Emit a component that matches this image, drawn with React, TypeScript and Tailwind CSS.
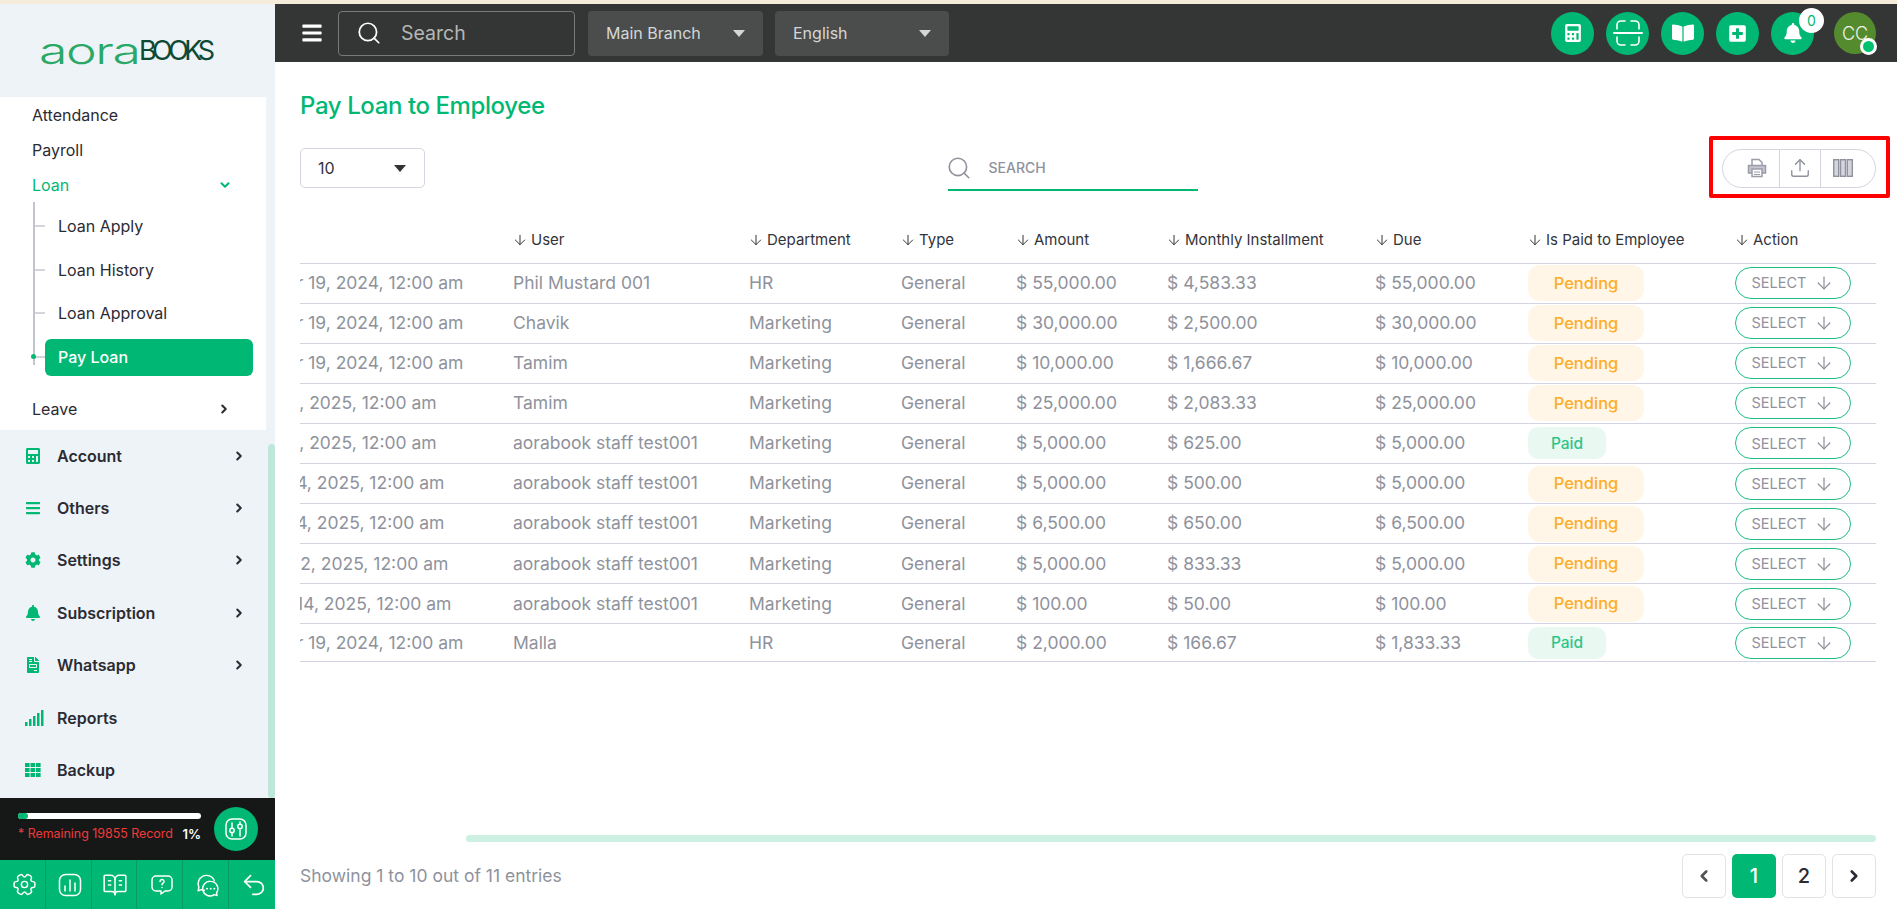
import { ArrowDown, BookOpenText, ChevronDown, ChevronLeft, ChevronRight, Search, Undo2, Upload } from "lucide-react";
import { FaBars, FaBell, FaBookOpen, FaCalculator, FaCog, FaFileInvoice, FaPlusSquare } from "react-icons/fa";
import type { ReactNode } from "react";

const rows = [
  { date: "Mar 19, 2024, 12:00 am", clip: "ml-[-29px]", user: "Phil Mustard 001", dept: "HR", amount: "55,000.00", monthly: "4,583.33", due: "55,000.00", paid: false },
  { date: "Mar 19, 2024, 12:00 am", clip: "ml-[-29px]", user: "Chavik", dept: "Marketing", amount: "30,000.00", monthly: "2,500.00", due: "30,000.00", paid: false },
  { date: "Mar 19, 2024, 12:00 am", clip: "ml-[-29px]", user: "Tamim", dept: "Marketing", amount: "10,000.00", monthly: "1,666.67", due: "10,000.00", paid: false },
  { date: "Jan 1, 2025, 12:00 am", clip: "ml-[-43px]", user: "Tamim", dept: "Marketing", amount: "25,000.00", monthly: "2,083.33", due: "25,000.00", paid: false },
  { date: "Jan 1, 2025, 12:00 am", clip: "ml-[-43px]", user: "aorabook staff test001", dept: "Marketing", amount: "5,000.00", monthly: "625.00", due: "5,000.00", paid: true },
  { date: "Mar 4, 2025, 12:00 am", clip: "ml-[-41px]", user: "aorabook staff test001", dept: "Marketing", amount: "5,000.00", monthly: "500.00", due: "5,000.00", paid: false },
  { date: "Mar 4, 2025, 12:00 am", clip: "ml-[-41px]", user: "aorabook staff test001", dept: "Marketing", amount: "6,500.00", monthly: "650.00", due: "6,500.00", paid: false },
  { date: "Mar 2, 2025, 12:00 am", clip: "ml-[-37px]", user: "aorabook staff test001", dept: "Marketing", amount: "5,000.00", monthly: "833.33", due: "5,000.00", paid: false },
  { date: "Jan 14, 2025, 12:00 am", clip: "ml-[-39px]", user: "aorabook staff test001", dept: "Marketing", amount: "100.00", monthly: "50.00", due: "100.00", paid: false },
  { date: "Mar 19, 2024, 12:00 am", clip: "ml-[-29px]", user: "Malla", dept: "HR", amount: "2,000.00", monthly: "166.67", due: "1,833.33", paid: true },
];

const columns = ["User", "Department", "Type", "Amount", "Monthly Installment", "Due", "Is Paid to Employee", "Action"];

function ReportsIcon() {
  return (
    <svg width="19" height="16" viewBox="0 0 19 16" fill="#00b873">
      <rect x="0" y="12" width="2.5" height="4" />
      <rect x="4" y="9" width="2.5" height="7" />
      <rect x="8" y="6" width="2.5" height="10" />
      <rect x="12" y="3" width="2.5" height="13" />
      <rect x="16" y="0" width="2.5" height="16" />
    </svg>
  );
}

function GridIcon() {
  return (
    <svg width="16" height="14" viewBox="0 0 16 14" fill="#00b873">
      {[0, 5.5, 11].map((x) => [0, 5, 10].map((y) => <rect key={`${x}-${y}`} x={x} y={y} width="4.6" height="4" />))}
    </svg>
  );
}

function ScanIcon() {
  return (
    <svg width="30" height="26" viewBox="0 0 30 26" fill="none" stroke="white" strokeWidth="1.6" strokeLinecap="round">
      <path d="M4 9V5a4 4 0 0 1 4-4h4M18 1h4a4 4 0 0 1 4 4v4M4 17v4a4 4 0 0 0 4 4h4M18 25h4a4 4 0 0 0 4-4v-4" />
      <path d="M1 13h28" strokeWidth="2" />
    </svg>
  );
}

function SlidersIcon() {
  return (
    <svg width="24" height="24" viewBox="0 0 24 24" fill="none" stroke="white" strokeWidth="1.5" strokeLinecap="round">
      <rect x="2" y="2" width="20" height="20" rx="6" />
      <path d="M8 6v5M8 16v3M16 5v2M16 13v6" />
      <circle cx="8" cy="13.5" r="2.2" />
      <circle cx="16" cy="9.5" r="2.2" />
    </svg>
  );
}

function GearIcon() {
  return (
    <svg width="25" height="25" viewBox="0 0 24 24" fill="none" stroke="white" strokeWidth="1.4" strokeLinejoin="round">
      <circle cx="12" cy="12" r="3" />
      <path d="M2 12.88v-1.76c0-1.04.85-1.9 1.9-1.9 1.81 0 2.55-1.28 1.64-2.85-.52-.9-.21-2.07.7-2.59l1.73-.99c.79-.47 1.81-.19 2.28.6l.11.19c.9 1.57 2.38 1.57 3.29 0l.11-.19c.47-.79 1.49-1.07 2.28-.6l1.73.99c.91.52 1.22 1.69.7 2.59-.91 1.57-.17 2.85 1.64 2.85 1.04 0 1.9.85 1.9 1.9v1.76c0 1.04-.85 1.9-1.9 1.9-1.81 0-2.55 1.28-1.64 2.85.52.91.21 2.07-.7 2.59l-1.73.99c-.79.47-1.81.19-2.28-.6l-.11-.19c-.9-1.57-2.38-1.57-3.29 0l-.11.19c-.47.79-1.49 1.07-2.28.6l-1.73-.99a1.899 1.899 0 0 1-.7-2.59c.91-1.57.17-2.85-1.64-2.85-1.05 0-1.9-.86-1.9-1.9Z" />
    </svg>
  );
}

function ChartBoxIcon() {
  return (
    <svg width="24" height="24" viewBox="0 0 24 24" fill="none" stroke="white" strokeWidth="1.5" strokeLinecap="round">
      <rect x="1.5" y="1.5" width="21" height="21" rx="6" />
      <path d="M7 18v-5M12 18V7M17 18v-8" />
    </svg>
  );
}

function QuestionIcon() {
  return (
    <svg width="24" height="24" viewBox="0 0 24 24" fill="none" stroke="white" strokeWidth="1.5" strokeLinecap="round" strokeLinejoin="round">
      <path d="M6 3h12a4 4 0 0 1 4 4v7a4 4 0 0 1-4 4h-3l-4 3v-3H6a4 4 0 0 1-4-4V7a4 4 0 0 1 4-4z" />
      <path d="M10 8.5a2 2 0 1 1 3 1.7c-.7.4-1 .8-1 1.5M12 14.5v.1" />
    </svg>
  );
}

function ChatIcon() {
  return (
    <svg width="25" height="25" viewBox="0 0 24 24" fill="none" stroke="white" strokeWidth="1.4" strokeLinecap="round" strokeLinejoin="round">
      <path d="M9 17.5c-1 0-2-.2-2.9-.6L3 18l.7-3.2A8 8 0 1 1 18.5 8" />
      <path d="M15 9a7 7 0 0 1 5.7 11l.5 2.6-2.8-.9A7 7 0 1 1 15 9z" />
      <path d="M11.5 16h.1M15 16h.1M18.5 16h.1" strokeWidth="1.8" />
    </svg>
  );
}

function PrinterIcon() {
  return (
    <svg width="20" height="20" viewBox="0 0 20 20" fill="none" stroke="#9a9ca8" strokeWidth="1.5">
      <path d="M5 7V1.5h7l3 3V7" />
      <path d="M5 15H1.5V7.5h17V15H15" fill="#c3c5cf" />
      <rect x="5" y="11" width="10" height="7.5" fill="white" />
      <path d="M7 14h6M7 16.5h6" strokeWidth="1" />
    </svg>
  );
}

function ColumnsIcon() {
  return (
    <svg width="20" height="18" viewBox="0 0 20 18" fill="#d3d4dc" stroke="#8f919e" strokeWidth="1.4">
      <rect x="0.7" y="0.7" width="5" height="16.6" />
      <rect x="7.5" y="0.7" width="5" height="16.6" />
      <rect x="14.3" y="0.7" width="5" height="16.6" />
    </svg>
  );
}

function SideItem({ icon, label, arrow = true }: { icon: ReactNode; label: string; arrow?: boolean }) {
  return (
    <div className="flex h-[52.4px] items-center pr-[29px] pl-[25px] text-[16px] font-semibold text-[#2b2b33]">
      <span className="flex w-[32px] shrink-0 items-center">{icon}</span>
      <span className="flex-1">{label}</span>
      {arrow && <ChevronRight className="size-[14px]" strokeWidth={3.5} />}
    </div>
  );
}

function SubItem({ label, active }: { label: string; active?: boolean }) {
  return (
    <div className="flex h-[43.8px] items-center">
      <span className="h-[2px] w-[12px] shrink-0 bg-[#d4d4dc]" />
      {active ? (
        <span className="flex h-[37px] w-[208px] items-center rounded-[6px] bg-[#00b873] pl-[13px] font-medium text-white">{label}</span>
      ) : (
        <span className="pl-[13px] text-[#2b2b33]">{label}</span>
      )}
    </div>
  );
}

function Sidebar() {
  return (
    <aside className="flex w-[275px] shrink-0 flex-col bg-[#eef3f8]">
      <div className="flex h-[93px] shrink-0 items-center pl-[39px] leading-none">
        <span className="inline-block origin-left scale-x-[1.4] text-[37px] font-light tracking-[-1px] text-[#2aa866]">aora</span>
        <span className="ml-[28px] text-[27px] font-normal tracking-[-4.5px] text-[#0d4a34]">BOOKS</span>
      </div>
      <div className="relative flex flex-1 flex-col">
        <div className="absolute top-[347px] right-0 bottom-0 w-[7px] rounded-[4px] bg-[#bde8d9]" />
        <div className="h-[332.5px] w-[266px] bg-white text-[16px]">
          <div className="flex h-[35px] items-center pl-[32px] text-[#2b2b33]">Attendance</div>
          <div className="flex h-[35px] items-center pl-[32px] text-[#2b2b33]">Payroll</div>
          <div className="flex h-[35px] items-center justify-between pr-[34px] pl-[32px] text-[#00b873]">
            Loan
            <ChevronDown className="size-[14px]" strokeWidth={3.5} />
          </div>
          <div className="relative ml-[33px] border-0 pt-[2px]">
            <div className="absolute top-0 left-0 h-[163px] w-[1.5px] bg-[#c4c4cf]" />
            <div className="absolute top-[152px] left-[-2px] size-[5px] rounded-full bg-[#00b873]" />
            <SubItem label="Loan Apply" />
            <SubItem label="Loan History" />
            <SubItem label="Loan Approval" />
            <SubItem label="Pay Loan" active />
          </div>
          <div className="mt-[12px] flex h-[35px] items-center justify-between pr-[35px] pl-[32px] text-[#2b2b33]">
            Leave
            <ChevronRight className="size-[14px]" strokeWidth={3.5} />
          </div>
        </div>
        <SideItem icon={<FaCalculator className="size-[16px] text-[#00b873]" />} label="Account" />
        <SideItem icon={<FaBars className="size-[16px] text-[#00b873]" />} label="Others" />
        <SideItem icon={<FaCog className="size-[16px] text-[#00b873]" />} label="Settings" />
        <SideItem icon={<FaBell className="size-[16px] text-[#00b873]" />} label="Subscription" />
        <SideItem icon={<FaFileInvoice className="size-[16px] text-[#00b873]" />} label="Whatsapp" />
        <SideItem icon={<ReportsIcon />} label="Reports" arrow={false} />
        <SideItem icon={<GridIcon />} label="Backup" arrow={false} />
      </div>
      <div className="flex h-[62px] shrink-0 items-center justify-between bg-[#161818] pr-[17px] pl-[18px]">
        <div className="w-[183px]">
          <div className="h-[6px] rounded-full bg-white">
            <div className="h-[6px] w-[10px] rounded-full bg-[#00b873]" />
          </div>
          <div className="mt-[6px] flex justify-between text-[12.4px] whitespace-nowrap">
            <span className="text-[#f03a3a]">* Remaining 19855 Record</span>
            <span className="text-[13px] font-semibold text-white">1%</span>
          </div>
        </div>
        <div className="flex size-[44px] items-center justify-center rounded-full bg-[#00b873]">
          <SlidersIcon />
        </div>
      </div>
      <div className="grid h-[49px] shrink-0 grid-cols-6 divide-x divide-[#0a9a63] bg-[#00b873] text-white">
        <div className="flex items-center justify-center pl-[4px]"><GearIcon /></div>
        <div className="flex items-center justify-center pl-[4px]"><ChartBoxIcon /></div>
        <div className="flex items-center justify-center pl-[2px]"><BookOpenText className="size-[26px]" strokeWidth={1.4} /></div>
        <div className="flex items-center justify-center pl-[4px]"><QuestionIcon /></div>
        <div className="flex items-center justify-center pl-[4px]"><ChatIcon /></div>
        <div className="flex items-center justify-center pl-[4px]"><Undo2 className="size-[28px]" strokeWidth={1.5} /></div>
      </div>
    </aside>
  );
}

function RoundButton({ children }: { children: ReactNode }) {
  return <div className="flex size-[43px] items-center justify-center rounded-full bg-[#00b873] text-white">{children}</div>;
}

function Topbar() {
  return (
    <header className="flex h-[58px] shrink-0 items-center bg-[#333635] pr-[21px] pl-[26px]">
      <FaBars className="size-[22px] text-white" />
      <div className="ml-[15px] flex h-[45px] w-[237px] items-center rounded-[4px] border border-[#777a79] pl-[17px] text-[19.5px] text-[#b5b7b6]">
        <Search className="size-[26px] text-white" strokeWidth={1.6} />
        <span className="ml-[19px] pt-[1px]">Search</span>
      </div>
      <div className="ml-[13px] flex h-[45px] w-[175px] items-center justify-between rounded-[4px] bg-[#4a4d4c] pr-[18px] pl-[18px] text-[16px] text-[#d5d6d6]">
        Main Branch
        <span className="h-0 w-0 border-x-[6px] border-t-[7px] border-x-transparent border-t-[#d5d6d6]" />
      </div>
      <div className="ml-[12px] flex h-[45px] w-[174px] items-center justify-between rounded-[4px] bg-[#4a4d4c] pr-[18px] pl-[18px] text-[16px] text-[#d5d6d6]">
        English
        <span className="h-0 w-0 border-x-[6px] border-t-[7px] border-x-transparent border-t-[#d5d6d6]" />
      </div>
      <div className="ml-auto flex items-center gap-[12px]">
        <RoundButton><FaCalculator className="size-[18px]" /></RoundButton>
        <RoundButton><ScanIcon /></RoundButton>
        <RoundButton><FaBookOpen className="size-[22px]" /></RoundButton>
        <RoundButton><FaPlusSquare className="size-[19px]" /></RoundButton>
        <div className="relative">
          <RoundButton><FaBell className="size-[20px]" /></RoundButton>
          <span className="absolute top-[-4px] right-[-10px] flex size-[25px] items-center justify-center rounded-full bg-white text-[14px] text-[#00b873]">0</span>
        </div>
        <div className="relative ml-[8px] flex size-[42px] items-center justify-center rounded-full bg-[#558b2f] text-[18px] font-light text-[#eef3e6]">
          CC
          <span className="absolute right-[-1px] bottom-[-1px] size-[17px] rounded-full border-[3px] border-white bg-[#00c26e]" />
        </div>
      </div>
    </header>
  );
}

function LoanTable() {
  return (
    <table className="mt-[32px] w-full table-fixed border-collapse text-left">
      <colgroup>
        <col className="w-[213px]" />
        <col className="w-[236px]" />
        <col className="w-[152px]" />
        <col className="w-[115px]" />
        <col className="w-[151px]" />
        <col className="w-[208px]" />
        <col className="w-[153px]" />
        <col className="w-[207px]" />
        <col />
      </colgroup>
      <thead>
        <tr className="h-[43px] border-b border-[#d3d3e3] text-[15px] text-[#33343b]">
          <th />
          {columns.map((column) => (
            <th key={column} className="pb-[2px] font-normal">
              <span className="ml-[-1px] flex items-center gap-[3px] whitespace-nowrap">
                <ArrowDown className="size-[16px]" strokeWidth={1.5} />
                {column}
              </span>
            </th>
          ))}
        </tr>
      </thead>
      <tbody className="text-[17.5px] text-[#8f929c]">
        {rows.map((row, index) => (
          <tr key={index} className="h-[40.1px] border-b border-[#d3d3e3] last:h-[38px]">
            <td className="overflow-hidden">
              <div className={`${row.clip} whitespace-nowrap`}>{row.date}</div>
            </td>
            <td className="whitespace-nowrap">{row.user}</td>
            <td>{row.dept}</td>
            <td>General</td>
            <td>$ {row.amount}</td>
            <td>$ {row.monthly}</td>
            <td>$ {row.due}</td>
            <td>
              {row.paid ? (
                <span className="flex h-[32px] w-[78px] items-center justify-center rounded-[10px] bg-[#eaf8f2] text-[15.5px] font-medium text-[#2cc58a]">Paid</span>
              ) : (
                <span className="flex h-[36px] w-[116px] items-center justify-center rounded-[12px] bg-[#fff6e8] text-[16.5px] font-medium text-[#fdad26]">Pending</span>
              )}
            </td>
            <td>
              <span className="flex h-[32px] w-[116px] items-center justify-center gap-[8px] rounded-full border-[1.5px] border-[#1fbd7f] text-[14.5px]">
                SELECT
                <ArrowDown className="size-[20px]" strokeWidth={1.5} />
              </span>
            </td>
          </tr>
        ))}
      </tbody>
    </table>
  );
}

function PageButton({ children, active }: { children: ReactNode; active?: boolean }) {
  return (
    <div className={active ? "flex size-[44px] items-center justify-center rounded-[5px] bg-[#00b873] text-[20px] font-medium text-white" : "flex size-[44px] items-center justify-center rounded-[5px] border border-[#e2e3e8] text-[20px] font-medium text-[#2b2b33]"}>
      {children}
    </div>
  );
}

export default function App() {
  return (
    <div className="flex h-[909px] w-[1897px] flex-col overflow-hidden bg-white font-['Inter',sans-serif]">
      <div className="h-[4px] shrink-0 bg-[#f5ecdc]" />
      <div className="flex flex-1">
        <Sidebar />
        <div className="relative flex flex-1 flex-col">
          <Topbar />
          <main className="flex flex-1 flex-col pr-[21px] pb-[11px] pl-[25px]">
            <h1 className="mt-[29px] text-[24px] leading-[30px] font-medium tracking-[-0.4px] text-[#00b873]">Pay Loan to Employee</h1>
            <div className="mt-[27px] flex h-[40px] items-center justify-between">
              <div className="flex h-[40px] w-[125px] items-center justify-between rounded-[5px] border border-[#d5d5e0] pr-[18px] pl-[17px] text-[16px] text-[#33343b]">
                10
                <span className="h-0 w-0 border-x-[6px] border-t-[7px] border-x-transparent border-t-[#333]" />
              </div>
              <div className="mr-[2px] flex h-[43px] w-[250px] items-center self-start border-b-2 border-[#00b873] pb-[2px] text-[14px] font-medium text-[#8f929c]">
                <Search className="ml-[-2px] size-[26px] text-[#8f929c]" strokeWidth={1.5} />
                <span className="ml-[17px]">SEARCH</span>
              </div>
              <div className="flex h-[39px] w-[154px] items-center rounded-full border border-[#d5d5e0] text-[#8f929c]">
                <div className="flex h-full w-[56px] items-center justify-end pr-[12px]"><PrinterIcon /></div>
                <div className="flex h-full w-[42px] items-center justify-center border-x border-[#d5d5e0]"><Upload className="size-[22px]" strokeWidth={1.5} /></div>
                <div className="flex h-full flex-1 items-center pl-[12px]"><ColumnsIcon /></div>
              </div>
            </div>
            <LoanTable />
            <div className="mt-auto h-[7px] w-[1410px] self-end rounded-full bg-[#ccf0e2]" />
            <div className="mt-[12px] flex items-center justify-between">
              <span className="text-[17.5px] text-[#8f929c]">Showing 1 to 10 out of 11 entries</span>
              <div className="flex gap-[6px]">
                <PageButton><ChevronLeft className="size-[18px] text-[#555]" strokeWidth={3.5} /></PageButton>
                <PageButton active>1</PageButton>
                <PageButton>2</PageButton>
                <PageButton><ChevronRight className="size-[18px]" strokeWidth={3.5} /></PageButton>
              </div>
            </div>
          </main>
          <div className="absolute top-[132px] right-[7px] h-[62px] w-[181px] rounded-[2px] border-[4px] border-[#ff0000]" />
        </div>
      </div>
    </div>
  );
}
